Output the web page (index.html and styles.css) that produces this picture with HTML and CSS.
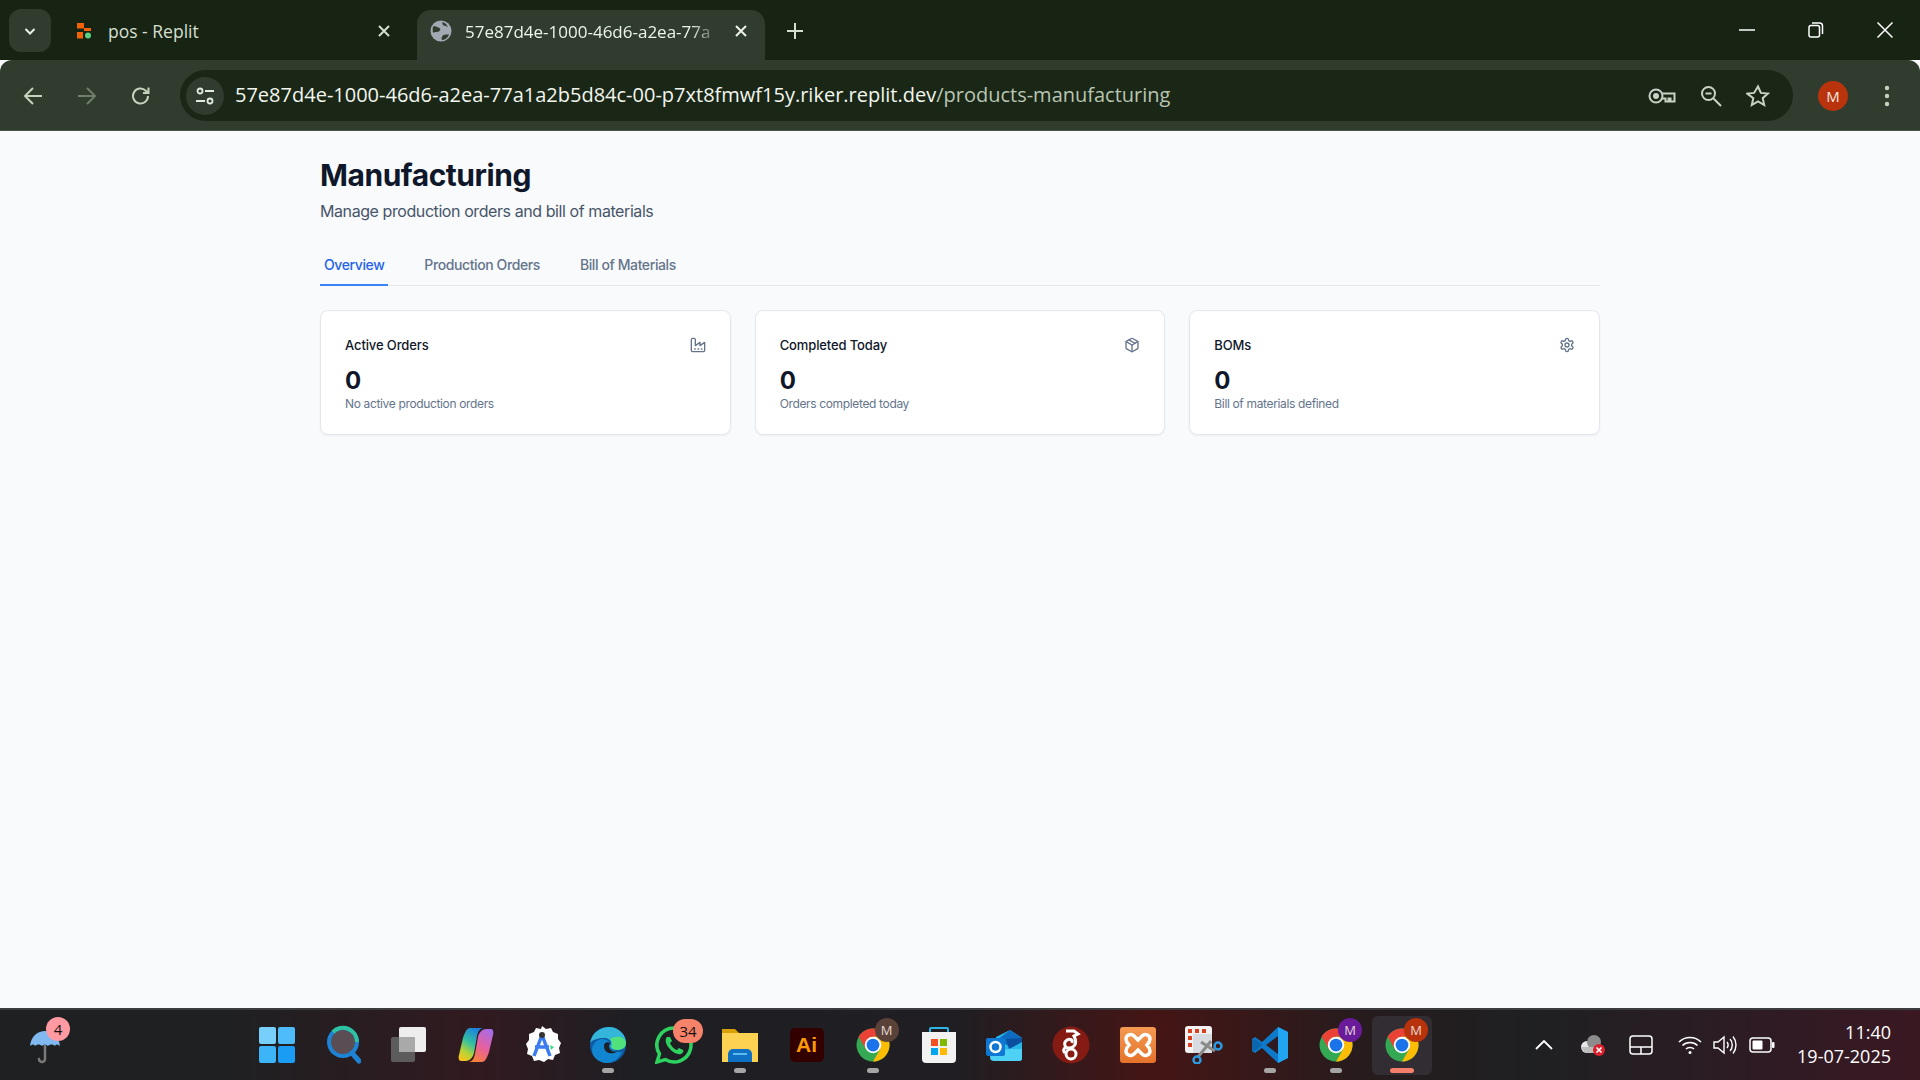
FILE: index.html
```html
<!DOCTYPE html>
<html>
<head>
  <title>Manufacturing</title>
  <link rel="stylesheet" href="styles.css">
</head>
<body>

<svg class="defs" width="0" height="0">
  <defs>
    <linearGradient id="copilot-a" x1="0.700" y1="0" x2="0.200" y2="1">
      <stop offset="0" stop-color="#1b7fe0"/>
      <stop offset="0.450" stop-color="#35c0a0"/>
      <stop offset="0.750" stop-color="#b5d335"/>
      <stop offset="1" stop-color="#f7c41f"/>
    </linearGradient>
    <linearGradient id="copilot-b" x1="0.800" y1="0" x2="0.300" y2="1">
      <stop offset="0" stop-color="#a56ce8"/>
      <stop offset="0.550" stop-color="#e8609c"/>
      <stop offset="1" stop-color="#f6803a"/>
    </linearGradient>
    <linearGradient id="xampp-bg" x1="0" y1="0" x2="0" y2="1">
      <stop offset="0" stop-color="#f59a52"/>
      <stop offset="1" stop-color="#e4722a"/>
    </linearGradient>
  </defs>
  <symbol id="chrome" viewBox="0 0 48 48">
    <circle cx="24" cy="24" r="22" fill="#34a853"/>
    <path d="M4.95 13A22 22 0 0 1 43.05 13H24L14.47 29.5Z" fill="#ea4335"/>
    <path d="M43.05 13A22 22 0 0 1 24 46L33.53 29.5 24 13Z" fill="#fbbc04"/>
    <circle cx="24" cy="24" r="11" fill="#fff"/>
    <circle cx="24" cy="24" r="8.5" fill="#1a73e8"/>
  </symbol>
</svg>

<div class="tabstrip">
  <div class="tab-search">
    <svg width="16" height="16" viewBox="0 0 16 16" fill="none" stroke="#e8efe3" stroke-width="2"><path d="M3.5 6l4.500 4.500L12.500 6"/></svg>
  </div>
  <div class="tab">
    <svg class="favicon" width="18" height="18" viewBox="0 0 18 18">
      <rect x="1" y="1" width="7" height="5.500" fill="#f26207"/>
      <rect x="8" y="6" width="7" height="3" fill="#f26207"/>
      <rect x="1" y="10" width="6" height="6.500" fill="#f26207"/>
      <circle cx="12" cy="13.500" r="3" fill="#59d185"/>
    </svg>
    <span class="tab-title">pos - Replit</span>
    <svg class="tab-close" width="14" height="14" viewBox="0 0 14 14" stroke="#d5dfd0" stroke-width="2"><path d="M2 2l10 10M12 2L2 12"/></svg>
  </div>
  <div class="tab tab-active">
    <svg class="favicon" width="22" height="22" viewBox="0 0 22 22">
      <circle cx="11" cy="11" r="10.500" fill="#a3a9b2"/>
      <path d="M3 6.500c3-1 4 .5 5.500 1s2.500 2 1 3.500-4 .5-5.500 1.500S2.500 9 3 6.500zM12 20c-1-2 0-4 1.500-5s4-.5 5.500-.5c-1 3-4 5.500-7 5.500zM12 2c1 1.500 0 3 2 3.500s3 1 4 2c-1-3-3-5-6-5.500z" fill="#303d2e"/>
    </svg>
    <span class="tab-title tab-title-fade">57e87d4e-1000-46d6-a2ea-77a</span>
    <svg class="tab-close" width="14" height="14" viewBox="0 0 14 14" stroke="#eef3ea" stroke-width="2"><path d="M2 2l10 10M12 2L2 12"/></svg>
  </div>
  <svg class="new-tab" width="18" height="18" viewBox="0 0 18 18" stroke="#d5dfd0" stroke-width="2"><path d="M9 1v16M1 9h16"/></svg>
  <div class="window-controls">
    <svg width="16" height="16" viewBox="0 0 16 16" stroke="#fff" stroke-width="1.500"><path d="M0 8h16"/></svg>
    <svg width="16" height="16" viewBox="0 0 16 16" fill="none" stroke="#fff" stroke-width="1.500"><rect x="1" y="3.500" width="10.500" height="11.500" rx="2"/><path d="M4 1h7.500a3 3 0 0 1 3 3v8"/></svg>
    <svg width="16" height="16" viewBox="0 0 16 16" stroke="#fff" stroke-width="1.500"><path d="M.5.500l15 15M15.500.500l-15 15"/></svg>
  </div>
</div>

<div class="toolbar">
  <svg class="nav-icon" width="20" height="20" viewBox="0 0 20 20" fill="none" stroke="#c5d3bd" stroke-width="2"><path d="M19 10H2M10 2l-8 8 8 8"/></svg>
  <svg class="nav-icon" width="20" height="20" viewBox="0 0 20 20" fill="none" stroke="#6f7e6a" stroke-width="2"><path d="M1 10h17M10 2l8 8-8 8"/></svg>
  <svg class="nav-icon" width="20" height="20" viewBox="0 0 20 20" fill="none" stroke="#c5d3bd" stroke-width="2"><path d="M17 10a7.500 7.500 0 1 1-2.200-5.300L17.500 7M17.500 1.500V7H12"/></svg>
  <div class="omnibox">
    <div class="site-info">
      <svg width="20" height="20" viewBox="0 0 20 20" fill="none" stroke="#e3eadd" stroke-width="1.800"><circle cx="5" cy="5" r="2.500"/><path d="M10 5h9M1 15h9"/><circle cx="15" cy="15" r="2.500"/></svg>
    </div>
    <div class="url"><span class="url-host">57e87d4e-1000-46d6-a2ea-77a1a2b5d84c-00-p7xt8fmwf15y.riker.replit.dev</span><span class="url-path">/products-manufacturing</span></div>
    <div class="omni-actions">
      <svg width="28" height="18" viewBox="0 0 28 18" fill="none" stroke="#c9d2c4" stroke-width="2"><circle cx="8" cy="9" r="6.500"/><circle cx="8" cy="9" r="2" fill="#c9d2c4"/><path d="M14 6.500h12.500v8h-4v-3h-2v3h-3v-3h-3.500"/></svg>
      <svg width="22" height="22" viewBox="0 0 22 22" fill="none" stroke="#c9d2c4" stroke-width="2"><circle cx="8.500" cy="8.500" r="6.500"/><path d="M13.500 13.500l7.500 7.500M5.500 8.500h6"/></svg>
      <svg width="24" height="24" viewBox="0 0 24 24" fill="none" stroke="#c9d2c4" stroke-width="2"><path d="M12 2.500l2.900 6.400 7 .7-5.200 4.600 1.500 6.800-6.200-3.500-6.200 3.500 1.500-6.800L1.100 9.600l7-.7z"/></svg>
    </div>
  </div>
  <div class="avatar">M</div>
  <svg class="menu-dots" width="6" height="22" viewBox="0 0 6 22" fill="#c5d3bd"><circle cx="3" cy="3" r="2.200"/><circle cx="3" cy="11" r="2.200"/><circle cx="3" cy="19" r="2.200"/></svg>
</div>

<main class="page">
  <div class="container">
    <h1>Manufacturing</h1>
    <p class="subtitle">Manage production orders and bill of materials</p>

    <div class="tabs">
      <div class="tabs-item tabs-item-active">Overview</div>
      <div class="tabs-item">Production Orders</div>
      <div class="tabs-item">Bill of Materials</div>
    </div>

    <div class="cards">
      <div class="card">
        <div class="card-head">
          <span class="card-title">Active Orders</span>
          <svg class="card-icon" viewBox="0 0 24 24"><path d="M2 20a2 2 0 0 0 2 2h16a2 2 0 0 0 2-2V8l-7 5V8l-7 5V4a2 2 0 0 0-2-2H4a2 2 0 0 0-2 2Z"/><path d="M17 18h1"/><path d="M12 18h1"/><path d="M7 18h1"/></svg>
        </div>
        <div class="card-value">0</div>
        <div class="card-note">No active production orders</div>
      </div>
      <div class="card">
        <div class="card-head">
          <span class="card-title">Completed Today</span>
          <svg class="card-icon" viewBox="0 0 24 24"><path d="m7.500 4.270 9 5.150"/><path d="M21 8a2 2 0 0 0-1-1.730l-7-4a2 2 0 0 0-2 0l-7 4A2 2 0 0 0 3 8v8a2 2 0 0 0 1 1.730l7 4a2 2 0 0 0 2 0l7-4A2 2 0 0 0 21 16Z"/><path d="m3.300 7 8.700 5 8.700-5"/><path d="M12 22V12"/></svg>
        </div>
        <div class="card-value">0</div>
        <div class="card-note">Orders completed today</div>
      </div>
      <div class="card">
        <div class="card-head">
          <span class="card-title">BOMs</span>
          <svg class="card-icon" viewBox="0 0 24 24"><path d="M12.220 2h-.44a2 2 0 0 0-2 2v.18a2 2 0 0 1-1 1.730l-.43.25a2 2 0 0 1-2 0l-.15-.08a2 2 0 0 0-2.730.73l-.22.38a2 2 0 0 0 .73 2.730l.15.1a2 2 0 0 1 1 1.720v.51a2 2 0 0 1-1 1.740l-.15.09a2 2 0 0 0-.73 2.730l.22.38a2 2 0 0 0 2.730.73l.15-.08a2 2 0 0 1 2 0l.43.25a2 2 0 0 1 1 1.730V20a2 2 0 0 0 2 2h.44a2 2 0 0 0 2-2v-.18a2 2 0 0 1 1-1.730l.43-.25a2 2 0 0 1 2 0l.15.08a2 2 0 0 0 2.730-.73l.22-.39a2 2 0 0 0-.73-2.730l-.15-.08a2 2 0 0 1-1-1.740v-.5a2 2 0 0 1 1-1.740l.15-.09a2 2 0 0 0 .73-2.730l-.22-.38a2 2 0 0 0-2.730-.73l-.15.08a2 2 0 0 1-2 0l-.43-.25a2 2 0 0 1-1-1.730V4a2 2 0 0 0-2-2z"/><circle cx="12" cy="12" r="3"/></svg>
        </div>
        <div class="card-value">0</div>
        <div class="card-note">Bill of materials defined</div>
      </div>
    </div>
  </div>
</main>

<footer class="taskbar">
  <div class="weather">
    <svg width="32" height="40" viewBox="0 0 32 40">
      <path d="M16 20v13a3 3 0 0 1-6 0" fill="none" stroke="#7a7a7a" stroke-width="2.500" stroke-linecap="round"/>
      <path d="M1 20C2 10 9 5 16 5s14 5 15 15c-2-2-4-2-5 0-2-2-5-2-7 0-2-2-4-2-6 0-2-2-5-2-7 0-1-2-3-2-5 0z" fill="#7fb9f0"/>
    </svg>
    <span class="badge-weather">4</span>
  </div>

  <div class="apps">
    <div class="app">
      <svg width="36" height="36" viewBox="0 0 36 36"><rect x="0" y="0" width="17" height="17" rx="2" fill="#76d0fb"/><rect x="19" y="0" width="17" height="17" rx="2" fill="#4dbcf8"/><rect x="0" y="19" width="17" height="17" rx="2" fill="#3cb4f8"/><rect x="19" y="19" width="17" height="17" rx="2" fill="#1a9cf5"/></svg>
    </div>
    <div class="app">
      <svg width="36" height="40" viewBox="-2 0 36 40"><circle cx="16" cy="17" r="14" fill="#5a4e54" stroke="#1d83d4" stroke-width="4"/><path d="M6 7A14 14 0 0 1 30 17" fill="none" stroke="#2fc2a0" stroke-width="4"/><path d="M25 28l7 8" stroke="#1d83d4" stroke-width="5" stroke-linecap="round"/></svg>
    </div>
    <div class="app">
      <svg width="36" height="36" viewBox="0 0 36 36"><rect x="0" y="10" width="24" height="25" rx="2" fill="#5c5c5c"/><rect x="8" y="0" width="27" height="25" rx="2" fill="#eeeeee"/><rect x="8" y="10" width="16" height="15" fill="#a9a9a9"/></svg>
    </div>
    <div class="app">
      <svg width="36" height="36" viewBox="0 0 36 36"><path d="M12 1h13c-4 1-5 4-6 8l-3 17c-1 4-4 8-8 8H3c-2 0-3-3-2-6l4-17c2-6 4-10 7-10z" fill="url(#copilot-a)"/><path d="M24 35H11c4-1 5-4 6-8l3-17c1-4 4-8 8-8h5c2 0 3 3 2 6l-4 17c-2 6-4 10-7 10z" fill="url(#copilot-b)"/></svg>
    </div>
    <div class="app">
      <svg width="38" height="40" viewBox="0 0 38 40"><path d="M19 1l4 3 5-1 2 4 5 2v5l3 4-2 5 1 5-5 2-2 5-5-1-4 3-5-2-5 1-2-5-5-2 1-5-2-5 3-4V9l5-2 2-4 5 1z" fill="#fff"/><path d="M19 10l-8 21M19 10l8 21M12 22h14" fill="none" stroke="#3b7df0" stroke-width="3.500"/><circle cx="19" cy="10" r="3" fill="#333"/><path d="M27 20l4 2-3 3z" fill="#3ddc84"/></svg>
    </div>
    <div class="app">
      <svg width="38" height="38" viewBox="0 0 38 38"><circle cx="19" cy="19" r="18" fill="#0c59a4"/><path d="M1 17C3 6 12 1 20 1c10 0 17 8 17 15 0 5-4 8-9 8-4 0-7-2-7-4 0-1 1-2 1-3 0-3-3-5-7-5-6 0-12 2-14 5z" fill="#33b6d9"/><path d="M37 17c0 5-4 7-9 7-2 0-5-1-6-3 2-3 1-6-1-8 6-4 15-3 16 4z" fill="#50e07c"/><path d="M3 24c0-6 5-11 10-11 5 0 8 3 8 5 0 4 4 9 12 8-3 7-9 11-15 11-8 0-15-6-15-13z" fill="#1285d0"/><path d="M15 20c0-3 3-5 6-3 0 1-1 2-1 3 0 3 3 6 8 6-6 3-13 1-13-6z" fill="#1f2024"/></svg>
      <span class="dot"></span>
    </div>
    <div class="app">
      <svg width="38" height="38" viewBox="0 0 38 38"><path d="M19 2a17 17 0 0 0-14.500 26L2 36l8.300-2.400A17 17 0 1 0 19 2z" fill="none" stroke="#2ed35f" stroke-width="3.500"/><path d="M12 11c-2 2-2 6 2 11s9 7 12 6c2-1 3-3 2-4l-4-2-2 2c-2 0-6-4-7-7l2-2-2-4z" fill="#2ed35f"/></svg>
      <span class="badge-count">34</span>
    </div>
    <div class="app">
      <svg width="38" height="36" viewBox="0 0 38 36"><path d="M1 2h13l4 4h19v5H1z" fill="#d9a007"/><rect x="1" y="6" width="36" height="29" fill="#fdd252"/><path d="M7 35V27a5 5 0 0 1 5-5h14a5 5 0 0 1 5 5v8z" fill="#1071c4"/><rect x="12" y="26" width="14" height="2" fill="#5dbdf0"/></svg>
      <span class="dot"></span>
    </div>
    <div class="app">
      <div class="ai-icon">Ai</div>
    </div>
    <div class="app">
      <svg width="36" height="36"><use href="#chrome"/></svg>
      <span class="profile profile-brown">M</span>
      <span class="dot"></span>
    </div>
    <div class="app">
      <svg width="36" height="38" viewBox="0 0 36 38"><path d="M9 7V3a1 1 0 0 1 1-1h16a1 1 0 0 1 1 1v4" fill="none" stroke="#2fb4e8" stroke-width="2"/><path d="M1 6h34v27a4 4 0 0 1-4 4H5a4 4 0 0 1-4-4z" fill="#f2f2f2"/><rect x="10" y="13" width="7" height="7" fill="#f25022"/><rect x="19" y="13" width="7" height="7" fill="#7fba00"/><rect x="10" y="22" width="7" height="7" fill="#00a4ef"/><rect x="19" y="22" width="7" height="7" fill="#ffb900"/></svg>
    </div>
    <div class="app">
      <svg width="38" height="32" viewBox="0 0 38 32"><path d="M10 8L24 1l12 8v20a3 3 0 0 1-3 3H10z" fill="#29b6e8"/><path d="M24 1l12 8-13 8-12-6z" fill="#0d6cc0"/><path d="M20 10l16-1v4l-13 7z" fill="#0a4fa0"/><path d="M8 32a3 3 0 0 1 0-8L22 20h14v9a3 3 0 0 1-3 3z" fill="#4fd0f5"/><rect x="0" y="9" width="19" height="18" rx="2" fill="#0f78d4"/><circle cx="9.500" cy="18" r="5" fill="none" stroke="#fff" stroke-width="2.500"/></svg>
    </div>
    <div class="app">
      <svg width="38" height="38" viewBox="0 0 38 38"><circle cx="19" cy="19" r="18.500" fill="#861b14"/><circle cx="19" cy="28" r="5" fill="none" stroke="#fff" stroke-width="3"/><path d="M14 5h8l4 3-4 2c2 4 3 7 0 10-2 2-6 3-8 1s-2-5 1-7 6 0 5 3M13 27c-2-2-2-4 1-6" fill="none" stroke="#fff" stroke-width="3"/></svg>
    </div>
    <div class="app">
      <svg width="36" height="36" viewBox="0 0 36 36"><rect width="36" height="36" rx="3" fill="url(#xampp-bg)"/><path d="M14 9c-3-3-8-1-8 3 0 2 1 4 3 6-2 2-3 4-3 6 0 4 5 6 8 3l4-4 4 4c3 3 8 1 8-3 0-2-1-4-3-6 2-2 3-4 3-6 0-4-5-6-8-3l-4 4z" fill="none" stroke="#fff" stroke-width="3.500"/></svg>
    </div>
    <div class="app">
      <svg width="38" height="38" viewBox="0 0 38 38"><rect x="0" y="0" width="27" height="27" rx="3" fill="#f2f2f2"/><rect x="8" y="8" width="19" height="19" fill="#d8dbe0"/><g fill="#d8401f"><rect x="3" y="3" width="4" height="4"/><rect x="10" y="3" width="4" height="4"/><rect x="17" y="3" width="4" height="4"/><rect x="3" y="10" width="4" height="4"/><rect x="3" y="17" width="4" height="4"/></g><path d="M16 16l14 9M26 15L13 31" stroke="#8a8a8a" stroke-width="3"/><circle cx="33" cy="20" r="3.500" fill="none" stroke="#2b9ae0" stroke-width="2.500"/><circle cx="12" cy="34" r="3.500" fill="none" stroke="#2b9ae0" stroke-width="2.500"/></svg>
    </div>
    <div class="app">
      <svg width="38" height="38" viewBox="0 0 38 38"><path d="M27 1l10 5v26l-10 5-16-15-7 5-3-2V13l3-2 7 5z" fill="#0e78c9"/><path d="M27 1l10 5v26l-10 5z" fill="#21a5f2"/><path d="M11 19l-7-6-3 1v10l3 1z" fill="#0a66ad"/><path d="M27 10v18L15 19z" fill="#2e1a22"/></svg>
      <span class="dot"></span>
    </div>
    <div class="app">
      <svg width="36" height="36"><use href="#chrome"/></svg>
      <span class="profile profile-purple">M</span>
      <span class="dot"></span>
    </div>
    <div class="app">
      <div class="app-active"></div>
      <svg class="app-icon-top" width="36" height="36"><use href="#chrome"/></svg>
      <span class="profile profile-red">M</span>
      <span class="dot dot-active"></span>
    </div>
  </div>

  <div class="tray">
    <svg class="tray-chevron" width="18" height="10" viewBox="0 0 18 10" fill="none" stroke="#fff" stroke-width="1.800"><path d="M1 9l8-8 8 8"/></svg>
    <div class="tray-cloud">
      <svg width="26" height="22" viewBox="0 0 26 22"><circle cx="7" cy="13" r="6" fill="#e8e8e8"/><circle cx="14" cy="8" r="7" fill="#8c8c8c"/><path d="M1 13h18v6H5z" fill="#bdbdbd"/><circle cx="19" cy="16" r="6" fill="#d9202c"/><path d="M16.500 13.500l5 5M21.500 13.500l-5 5" stroke="#fff" stroke-width="1.600"/></svg>
    </div>
    <svg class="tray-touchpad" width="24" height="20" viewBox="0 0 24 20" fill="none" stroke="#fff" stroke-width="1.500"><rect x="1" y="1" width="22" height="18" rx="3"/><path d="M1 12h22M12 12v7"/></svg>
    <svg class="tray-wifi" width="24" height="20" viewBox="0 0 24 20" fill="none" stroke="#fff" stroke-width="1.600"><path d="M1 7c6-6 16-6 22 0M4.500 10.500c4-4 11-4 15 0M8 14c2-2 6-2 8 0"/><circle cx="12" cy="17.500" r="1.500" fill="#fff" stroke="none"/></svg>
    <svg class="tray-volume" width="24" height="22" viewBox="0 0 24 22" fill="none" stroke="#fff" stroke-width="1.400"><path d="M1 8v6h4l6 5V3L5 8z"/><path d="M14 8c1.500 2 1.500 4 0 6M17 5c3 3 3 9 0 12M20 2.500c4 5 4 12 0 17"/></svg>
    <svg class="tray-battery" width="26" height="16" viewBox="0 0 26 16" fill="none"><rect x="1" y="1" width="21" height="14" rx="3" stroke="#fff" stroke-width="1.500"/><rect x="3.500" y="3.500" width="10" height="9" rx="1" fill="#fff"/><rect x="23" y="5" width="2.500" height="6" rx="1" fill="#fff"/></svg>
    <div class="clock">
      <span>11:40</span>
      <span>19-07-2025</span>
    </div>
  </div>
</footer>

</body>
</html>
```

FILE: styles.css
```css
* {
  box-sizing: border-box;
}

html, body {
  height: 100%;
}

body {
  margin: 0;
  width: 1920px;
  height: 1080px;
  display: flex;
  flex-direction: column;
  overflow: hidden;
  background-color: #f8fafc;
  font-family: "Open Sans", "Noto Sans", sans-serif;
}

.defs {
  position: absolute;
}

/* Browser tab strip */
.tabstrip {
  height: 60px;
  flex: none;
  display: flex;
  align-items: flex-end;
  background-color: #172413;
  color: #d5dfd0;
}

.tab-search {
  width: 42px;
  height: 43px;
  margin: 0 0 8px 9px;
  border-radius: 12px;
  background-color: #303d2e;
  display: flex;
  align-items: center;
  justify-content: center;
}

.tab {
  width: 351px;
  height: 50px;
  padding: 0 26px 8px 10px;
  margin-left: 15px;
  display: flex;
  align-items: center;
  gap: 14px;
  font-size: 17.500px;
}

.tab-active {
  margin-left: 0;
  width: 348px;
  padding: 0 17px 8px 13px;
  gap: 13px;
  border-radius: 14px 14px 0 0;
  background-color: #303d2e;
  color: #eef3ea;
}

.tab-title {
  flex: 1;
  white-space: nowrap;
}

.tab-title-fade {
  font-size: 17px;
  -webkit-mask-image: linear-gradient(to right, #000 88%, transparent);
  mask-image: linear-gradient(to right, #000 88%, transparent);
}

.favicon {
  flex: none;
}

.tab-close {
  flex: none;
}

.new-tab {
  margin: 0 0 20px 21px;
}

.window-controls {
  margin-left: auto;
  margin-right: 27px;
  height: 60px;
  display: flex;
  align-items: center;
  gap: 53px;
}

/* Toolbar with address bar */
.toolbar {
  height: 71px;
  flex: none;
  padding: 10px 24px 10px 23px;
  display: flex;
  align-items: center;
  background-color: #303d2e;
  border-radius: 12px 12px 0 0;
  box-shadow: inset 0 -1px 0 #465243;
  position: relative;
}

.nav-icon {
  margin-right: 34px;
}

.omnibox {
  width: 1613px;
  height: 51px;
  margin-left: -5px;
  padding: 0 23px 0 6px;
  display: flex;
  align-items: center;
  border-radius: 26px;
  background-color: #1a2616;
}

.site-info {
  width: 38px;
  height: 38px;
  border-radius: 50%;
  background-color: #303d2e;
  display: flex;
  align-items: center;
  justify-content: center;
}

.url {
  margin-left: 11px;
  margin-bottom: 2px;
  font-size: 20px;
  color: #f2f6ee;
  white-space: nowrap;
}

.url-path {
  color: #b9c5b3;
}

.omni-actions {
  margin-left: auto;
  display: flex;
  align-items: center;
  gap: 24px;
}

.avatar {
  width: 30px;
  height: 30px;
  margin-left: 25px;
  border-radius: 50%;
  background-color: #b9330c;
  color: #f6e7e0;
  font-size: 15px;
  display: flex;
  align-items: center;
  justify-content: center;
}

.menu-dots {
  margin-left: 36px;
}

/* Page */
.page {
  flex: 1;
  font-family: Inter, "Liberation Sans", sans-serif;
  color: #0f172a;
}

.container {
  width: 1280px;
  margin: 0 auto;
  padding-top: 26px;
}

h1 {
  margin: 0;
  font-size: 30px;
  line-height: 36px;
  font-weight: 700;
  letter-spacing: -0.470px;
}

.subtitle {
  margin: 6px 0 0;
  font-size: 16px;
  line-height: 24px;
  letter-spacing: -0.420px;
  color: #475569;
}

.tabs {
  margin-top: 32px;
  display: flex;
  gap: 32px;
  border-bottom: 1px solid #e2e8f0;
}

.tabs-item {
  padding: 0 4px 9px;
  margin-bottom: -1px;
  font-size: 14px;
  line-height: 20px;
  font-weight: 500;
  letter-spacing: -0.400px;
  color: #64748b;
  border-bottom: 2px solid transparent;
}

.tabs-item-active {
  color: #2563eb;
  border-bottom-color: #3b82f6;
}

.cards {
  margin-top: 24px;
  display: grid;
  grid-template-columns: repeat(3, 1fr);
  gap: 24px;
}

.card {
  padding: 24px 24px 22px;
  background-color: white;
  border: 1px solid #e2e8f0;
  border-radius: 8px;
  box-shadow: 0 1px 2px rgba(0, 0, 0, 0.05);
}

.card-head {
  display: flex;
  align-items: center;
  justify-content: space-between;
  padding-bottom: 11px;
}

.card-title {
  font-size: 13px;
  line-height: 20px;
  font-weight: 500;
  letter-spacing: -0.120px;
}

.card-icon {
  width: 16px;
  height: 16px;
  fill: none;
  stroke: #64748b;
  stroke-width: 2;
  stroke-linecap: round;
  stroke-linejoin: round;
}

.card-value {
  font-size: 24px;
  line-height: 30px;
  font-weight: 700;
}

.card-note {
  font-size: 12px;
  line-height: 16px;
  letter-spacing: -0.350px;
  color: #64748b;
}

/* Windows taskbar */
.taskbar {
  height: 72px;
  flex: none;
  display: flex;
  align-items: center;
  border-top: 2px solid #3c3c3e;
  background: linear-gradient(to right, #1f2022 0%, #1f2022 12%, #311a20 25%, #1e1f23 33%, #201e22 50%, #451515 60%, #241c1e 72%, #1f2022 80%, #2c1c24 90%, #3a1822 100%);
  color: white;
  position: relative;
}

.weather {
  width: 32px;
  height: 40px;
  margin-left: 29px;
  margin-top: 2px;
  position: relative;
}

.badge-weather {
  position: absolute;
  top: -9px;
  left: 17px;
  width: 24px;
  height: 24px;
  border-radius: 50%;
  background-color: #ff9aa2;
  color: #111;
  font-size: 15px;
  display: flex;
  align-items: center;
  justify-content: center;
}

.apps {
  margin-left: 183px;
  display: flex;
}

.app {
  width: 66.200px;
  height: 60px;
  display: flex;
  align-items: center;
  justify-content: center;
  position: relative;
}

.app-active {
  position: absolute;
  top: 1px;
  left: 3px;
  width: 60px;
  height: 59px;
  background-color: #322d32;
  border-radius: 6px;
}

.app-icon-top {
  position: relative;
}

.dot {
  position: absolute;
  bottom: 2px;
  left: 27px;
  width: 12px;
  height: 5px;
  border-radius: 3px;
  background-color: #a5a5a5;
}

.dot-active {
  left: 21px;
  width: 24px;
  background-color: #f47f6b;
}

.ai-icon {
  width: 34px;
  height: 34px;
  border-radius: 5px;
  background-color: #330000;
  color: #ff9a00;
  font-family: "Liberation Sans", sans-serif;
  font-size: 21px;
  font-weight: 700;
  display: flex;
  align-items: center;
  justify-content: center;
}

.badge-count {
  position: absolute;
  top: 4px;
  left: 32px;
  width: 30px;
  height: 24px;
  border-radius: 12px;
  background-color: #f6826a;
  color: #111;
  font-size: 15px;
  display: flex;
  align-items: center;
  justify-content: center;
}

.profile {
  position: absolute;
  top: 3px;
  left: 35px;
  width: 24px;
  height: 24px;
  border-radius: 50%;
  color: #e6d9d4;
  font-size: 13px;
  display: flex;
  align-items: center;
  justify-content: center;
}

.profile-brown {
  background-color: #5b4238;
}

.profile-purple {
  background-color: #6a1b9a;
}

.profile-red {
  background-color: #b8330c;
}

.tray {
  position: absolute;
  right: 29px;
  top: 0;
  bottom: 0;
  display: flex;
  align-items: center;
}

.tray-cloud {
  display: flex;
  margin-left: 27px;
}

.tray-touchpad {
  margin-left: 23px;
}

.tray-wifi {
  margin-left: 25px;
}

.tray-volume {
  margin-left: 11px;
}

.tray-battery {
  margin-left: 12px;
}

.clock {
  margin-left: 22px;
  margin-top: -2px;
  display: flex;
  flex-direction: column;
  align-items: flex-end;
  font-size: 18px;
  line-height: 24px;
}
```
